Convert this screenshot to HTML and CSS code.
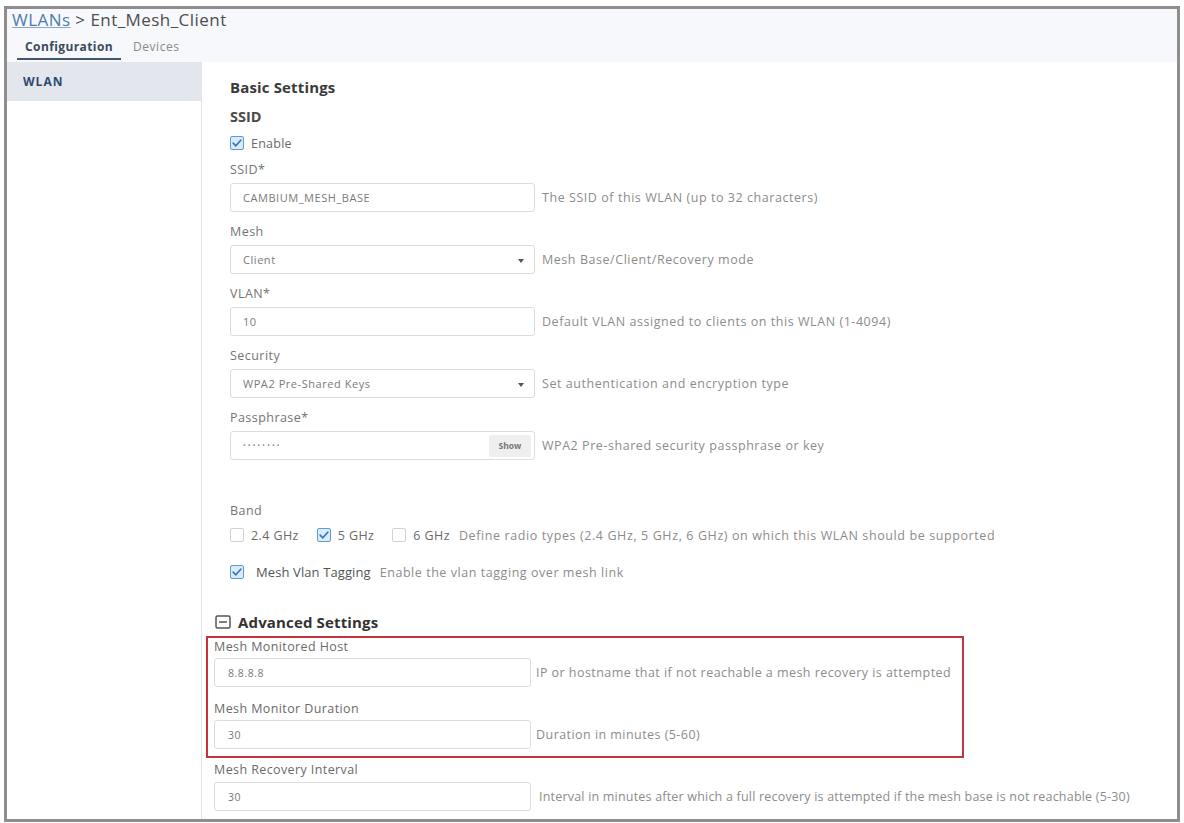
FILE: index.html
```html
<!DOCTYPE html>
<html lang="en">
<head>
<meta charset="utf-8">
<title>WLANs &gt; Ent_Mesh_Client</title>
<link rel="stylesheet" href="styles.css">
</head>
<body>
<div class="frame">
  <header class="header">
    <div class="crumb"><a class="crumb-link" href="#">WLANs</a> &gt; Ent_Mesh_Client</div>
    <nav class="tabs">
      <span class="tab active">Configuration</span>
      <span class="tab">Devices</span>
    </nav>
  </header>
  <div class="body">
    <aside class="sidebar">
      <div class="side-item">WLAN</div>
    </aside>
    <main class="main">
      <section class="basic">
        <h2 class="section-title">Basic Settings</h2>
        <h3 class="sub-title">SSID</h3>
        <label class="check-row enable-row">
          <span class="cb checked"><svg viewBox="0 0 14 14" width="14" height="14"><path d="M3.2 7.2 L5.8 9.8 L10.8 4.2" fill="none" stroke="#2f78c4" stroke-width="1.7" stroke-linecap="round" stroke-linejoin="round"/></svg></span>
          <span class="cb-text">Enable</span>
        </label>

        <div class="field">
          <div class="label">SSID*</div>
          <div class="row">
            <div class="input">CAMBIUM_MESH_BASE</div>
            <div class="desc">The SSID of this WLAN (up to 32 characters)</div>
          </div>
        </div>

        <div class="field">
          <div class="label">Mesh</div>
          <div class="row">
            <div class="input select">Client<span class="caret"></span></div>
            <div class="desc">Mesh Base/Client/Recovery mode</div>
          </div>
        </div>

        <div class="field">
          <div class="label">VLAN*</div>
          <div class="row">
            <div class="input">10</div>
            <div class="desc">Default VLAN assigned to clients on this WLAN (1-4094)</div>
          </div>
        </div>

        <div class="field">
          <div class="label">Security</div>
          <div class="row">
            <div class="input select">WPA2 Pre-Shared Keys<span class="caret"></span></div>
            <div class="desc">Set authentication and encryption type</div>
          </div>
        </div>

        <div class="field">
          <div class="label">Passphrase*</div>
          <div class="row">
            <div class="input pass"><span class="dots">••••••••</span><span class="show-btn">Show</span></div>
            <div class="desc">WPA2 Pre-shared security passphrase or key</div>
          </div>
        </div>

        <div class="band">
          <div class="label">Band</div>
          <div class="band-row">
            <label class="check-row">
              <span class="cb"></span>
              <span class="cb-text band-text">2.4 GHz</span>
            </label>
            <label class="check-row">
              <span class="cb checked"><svg viewBox="0 0 14 14" width="14" height="14"><path d="M3.2 7.2 L5.8 9.8 L10.8 4.2" fill="none" stroke="#2f78c4" stroke-width="1.7" stroke-linecap="round" stroke-linejoin="round"/></svg></span>
              <span class="cb-text band-text">5 GHz</span>
            </label>
            <label class="check-row">
              <span class="cb"></span>
              <span class="cb-text band-text">6 GHz</span>
            </label>
            <span class="desc band-desc">Define radio types (2.4 GHz, 5 GHz, 6 GHz) on which this WLAN should be supported</span>
          </div>
        </div>

        <label class="check-row vlan-row">
          <span class="cb checked"><svg viewBox="0 0 14 14" width="14" height="14"><path d="M3.2 7.2 L5.8 9.8 L10.8 4.2" fill="none" stroke="#2f78c4" stroke-width="1.7" stroke-linecap="round" stroke-linejoin="round"/></svg></span>
          <span class="vlan-text">Mesh Vlan Tagging</span>
          <span class="desc vlan-desc">Enable the vlan tagging over mesh link</span>
        </label>
      </section>

      <section class="advanced">
        <h2 class="adv-title">
          <svg class="adv-icon" viewBox="0 0 16 14" width="16" height="14"><rect x="1" y="1" width="14" height="12" rx="1.5" fill="none" stroke="#555" stroke-width="1.5"/><path d="M4 7 H12" stroke="#555" stroke-width="1.5"/></svg>
          Advanced Settings
        </h2>
        <div class="highlight">
          <div class="afield">
            <div class="alabel">Mesh Monitored Host</div>
            <div class="row">
              <div class="input ainput">8.8.8.8</div>
              <div class="desc adesc">IP or hostname that if not reachable a mesh recovery is attempted</div>
            </div>
          </div>
          <div class="afield second">
            <div class="alabel">Mesh Monitor Duration</div>
            <div class="row">
              <div class="input ainput">30</div>
              <div class="desc adesc">Duration in minutes (5-60)</div>
            </div>
          </div>
        </div>
        <div class="afield after">
          <div class="alabel">Mesh Recovery Interval</div>
          <div class="row">
            <div class="input ainput">30</div>
            <div class="desc adesc tight">Interval in minutes after which a full recovery is attempted if the mesh base is not reachable (5-30)</div>
          </div>
        </div>
      </section>
    </main>
  </div>
</div>
</body>
</html>
```

FILE: styles.css
```css
* { box-sizing: border-box; }

html, body {
  margin: 0;
  padding: 0;
  background: #ffffff;
}

body {
  font-family: "Open Sans", "Liberation Sans", sans-serif;
  color: #555;
}

.frame {
  margin: 6px 4px 0 4px;
  height: 816px;
  border: 3px solid #8e8e8e;
  display: flex;
  flex-direction: column;
  overflow: hidden;
  background: #fff;
}

/* header */
.header {
  background: #f6f8fb;
  height: 53px;
  padding-left: 5px;
  flex-shrink: 0;
}

.crumb {
  font-size: 17px;
  line-height: 22px;
  color: #4d4d4d;
  letter-spacing: 0.45px;
}

.crumb-link {
  color: #4f7bab;
  text-decoration: underline;
  text-decoration-color: #8aa9c9;
}

.tabs {
  display: flex;
  margin-top: 6px;
  padding-left: 5px;
}

.tab {
  font-size: 12px;
  line-height: 20px;
  color: #8a8a8a;
  letter-spacing: 0.55px;
  padding: 0 0 0 8px;
}

.tab.active {
  font-weight: 700;
  color: #3c4a5a;
  letter-spacing: 0.4px;
  border-bottom: 2px solid #46556a;
  padding: 0 8px 1px 8px;
  margin-right: 4px;
}

/* body */
.body {
  display: flex;
  flex: 1;
  min-height: 0;
}

.sidebar {
  width: 195px;
  flex-shrink: 0;
  border-right: 1px solid #e2e4e8;
}

.side-item {
  height: 39px;
  background: #e3e7ed;
  padding-left: 16px;
  font-size: 12px;
  letter-spacing: 1px;
  font-weight: 700;
  color: #2f4a70;
  line-height: 39px;
}

.main {
  flex: 1;
  padding: 0 0 0 4px;
}

.basic {
  padding: 15px 0 0 24px;
}

.section-title {
  margin: 0;
  font-size: 15px;
  letter-spacing: 0.15px;
  line-height: 20px;
  font-weight: 700;
  color: #3a3a3a;
}

.sub-title {
  margin: 10px 0 0 0;
  font-size: 14.5px;
  line-height: 20px;
  font-weight: 700;
  color: #4a4a4a;
}

.check-row {
  display: flex;
  align-items: center;
  height: 18px;
}

.enable-row { margin-top: 7px; }

.cb {
  width: 14px;
  height: 14px;
  border: 1px solid #d2d2d2;
  border-radius: 2px;
  background: #fff;
  display: inline-flex;
  align-items: center;
  justify-content: center;
  flex-shrink: 0;
}

.cb svg { display: block; margin: -1px; }

.cb.checked {
  background: #dcebf8;
  border-color: #5b9bd6;
}

.cb-text {
  margin-left: 7px;
  font-size: 12.5px;
  letter-spacing: 0.25px;
  color: #6a6a6a;
}

.band-text {
  margin-left: 7px;
  letter-spacing: 0.4px;
}

.field { margin-top: 10px; }
.field + .field { margin-top: 12px; }

.label {
  font-size: 12.5px;
  letter-spacing: 0.45px;
  line-height: 16px;
  color: #747474;
  margin-bottom: 5px;
}

.row {
  display: flex;
  align-items: center;
}

.input {
  width: 305px;
  height: 29px;
  border: 1px solid #dcdcdc;
  border-radius: 3px;
  background: #fff;
  padding-left: 12px;
  font-size: 11px;
  letter-spacing: 0.55px;
  color: #7a7a7a;
  display: flex;
  align-items: center;
  position: relative;
  flex-shrink: 0;
}

.select .caret {
  position: absolute;
  right: 10px;
  top: 13px;
  width: 0;
  height: 0;
  border-left: 3.5px solid transparent;
  border-right: 3.5px solid transparent;
  border-top: 4px solid #555;
}

.pass { justify-content: space-between; padding-right: 3px; }

.dots {
  font-size: 7px;
  letter-spacing: 2.2px;
  color: #888;
}

.show-btn {
  background: #efefef;
  height: 22px;
  width: 42px;
  display: flex;
  align-items: center;
  justify-content: center;
  font-size: 8.5px;
  letter-spacing: 0;
  font-weight: 700;
  color: #777;
  border-radius: 2px;
}

.desc {
  margin-left: 7px;
  font-size: 12.5px;
  letter-spacing: 0.55px;
  color: #8c8c8c;
  white-space: nowrap;
}

.band { margin-top: 43px; }

.band .label { margin-bottom: 7px; }

.band-row {
  display: flex;
  align-items: center;
  height: 18px;
}

.band-row .check-row { margin-right: 18px; }
.band-row .check-row:nth-child(3) { margin-right: 9px; }

.band-desc {
  margin-left: 0;
  letter-spacing: 0.6px;
}

.vlan-row { margin-top: 19px; }

.vlan-text {
  margin-left: 12px;
  font-size: 13px;
  letter-spacing: 0.1px;
  color: #555;
}

.vlan-desc {
  margin-left: 9px;
}

/* advanced */
.advanced { margin-top: 31px; }

.adv-title {
  margin: 0;
  padding-left: 9px;
  display: flex;
  align-items: center;
  font-size: 15px;
  letter-spacing: 0.15px;
  line-height: 20px;
  font-weight: 700;
  color: #333;
}

.adv-icon { margin-right: 7px; }

.highlight {
  margin-top: 4px;
  width: 758px;
  border: 2px solid #c8323d;
  padding: 1px 0 7px 6px;
}

.alabel {
  font-size: 12.5px;
  letter-spacing: 0.4px;
  line-height: 16px;
  color: #6a6a6a;
  margin-bottom: 3px;
}

.afield.second { margin-top: 14px; }

.afield.after {
  margin-top: 4px;
  padding-left: 8px;
}

.afield.after .alabel { margin-bottom: 4px; }

.ainput {
  width: 317px;
  padding-left: 13px;
  font-size: 10.5px;
}

.adesc {
  margin-left: 5px;
  letter-spacing: 0.45px;
}

.adesc.tight {
  margin-left: 8px;
  letter-spacing: 0.2px;
}
```
